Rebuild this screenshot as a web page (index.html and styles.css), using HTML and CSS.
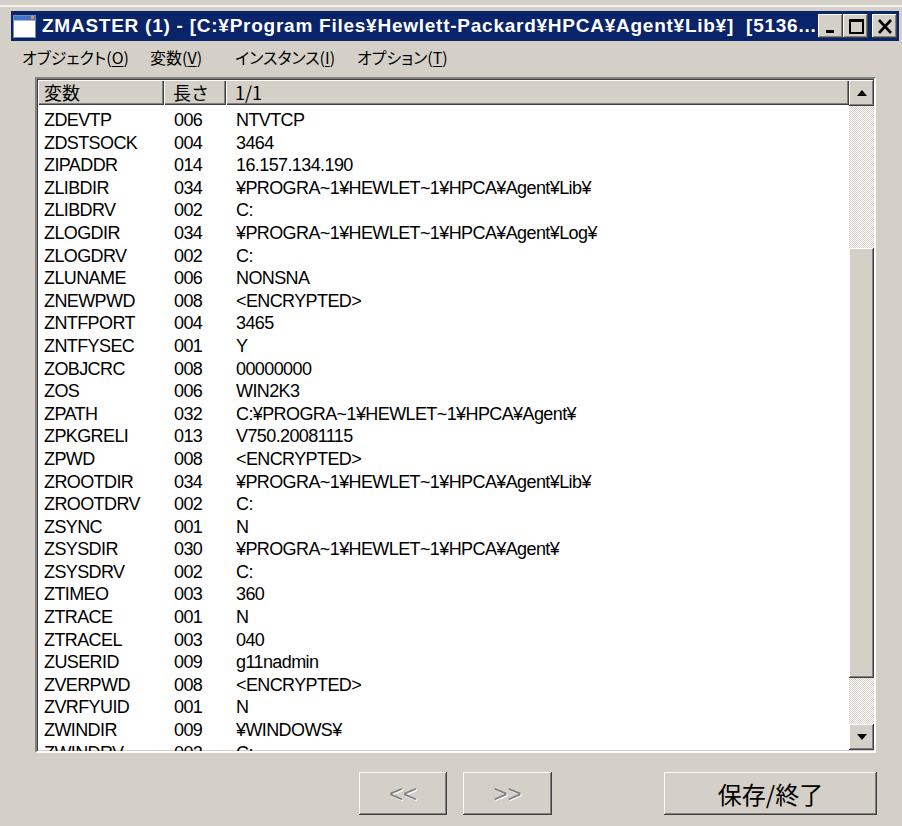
FILE: index.html
```html
<!DOCTYPE html>
<html lang="ja">
<head>
<meta charset="utf-8">
<title>ZMASTER (1)</title>
<link rel="stylesheet" href="styles.css">
</head>
<body>
<div class="frame">
  <div class="frame-top"></div>

  <div class="titlebar">
    <svg class="app-icon" width="23" height="23" viewBox="0 0 23 23">
      <rect x="0.5" y="0.5" width="22" height="22" fill="#ffffff" stroke="#6b8fc8"/>
      <rect x="1" y="1" width="21" height="4" fill="#3f74c6"/>
      <rect x="18" y="1" width="3" height="3" fill="#f08a3c"/>
      <rect x="1" y="5" width="21" height="1" fill="#9db8e4"/>
    </svg>
    <span class="title-text">ZMASTER (1) - [C:¥Program Files¥Hewlett-Packard¥HPCA¥Agent¥Lib¥]&nbsp; [5136...</span>
    <div class="caption-buttons">
      <button class="cap-btn" aria-label="最小化">
        <svg width="24" height="24" viewBox="0 0 24 24"><rect x="7" y="16" width="8" height="3" fill="#000"/></svg>
      </button>
      <button class="cap-btn" aria-label="最大化">
        <svg width="24" height="24" viewBox="0 0 24 24"><path d="M5 5h15v15H5z M7 8v10h11V8z" fill="#000" fill-rule="evenodd"/></svg>
      </button>
      <button class="cap-btn cap-close" aria-label="閉じる">
        <svg width="24" height="24" viewBox="0 0 24 24"><path d="M6 6l12 13M18 6L6 19" stroke="#000" stroke-width="2.6" fill="none"/></svg>
      </button>
    </div>
  </div>

  <nav class="menubar">
    <span class="menu-item">オブジェクト(<u>O</u>)</span>
    <span class="menu-item">変数(<u>V</u>)</span>
    <span class="menu-item">インスタンス(<u>I</u>)</span>
    <span class="menu-item">オプション(<u>T</u>)</span>
  </nav>

  <div class="listview">
    <div class="grid-pane">
      <div class="list-header">
        <div class="hcell">変数</div>
        <div class="hcell">長さ</div>
        <div class="hcell">1/1</div>
      </div>
      <div class="list-body">
        <div class="row"><span>ZDEVTP</span><span>006</span><span>NTVTCP</span></div>
        <div class="row"><span>ZDSTSOCK</span><span>004</span><span>3464</span></div>
        <div class="row"><span>ZIPADDR</span><span>014</span><span>16.157.134.190</span></div>
        <div class="row"><span>ZLIBDIR</span><span>034</span><span>¥PROGRA~1¥HEWLET~1¥HPCA¥Agent¥Lib¥</span></div>
        <div class="row"><span>ZLIBDRV</span><span>002</span><span>C:</span></div>
        <div class="row"><span>ZLOGDIR</span><span>034</span><span>¥PROGRA~1¥HEWLET~1¥HPCA¥Agent¥Log¥</span></div>
        <div class="row"><span>ZLOGDRV</span><span>002</span><span>C:</span></div>
        <div class="row"><span>ZLUNAME</span><span>006</span><span>NONSNA</span></div>
        <div class="row"><span>ZNEWPWD</span><span>008</span><span>&lt;ENCRYPTED&gt;</span></div>
        <div class="row"><span>ZNTFPORT</span><span>004</span><span>3465</span></div>
        <div class="row"><span>ZNTFYSEC</span><span>001</span><span>Y</span></div>
        <div class="row"><span>ZOBJCRC</span><span>008</span><span>00000000</span></div>
        <div class="row"><span>ZOS</span><span>006</span><span>WIN2K3</span></div>
        <div class="row"><span>ZPATH</span><span>032</span><span>C:¥PROGRA~1¥HEWLET~1¥HPCA¥Agent¥</span></div>
        <div class="row"><span>ZPKGRELI</span><span>013</span><span>V750.20081115</span></div>
        <div class="row"><span>ZPWD</span><span>008</span><span>&lt;ENCRYPTED&gt;</span></div>
        <div class="row"><span>ZROOTDIR</span><span>034</span><span>¥PROGRA~1¥HEWLET~1¥HPCA¥Agent¥Lib¥</span></div>
        <div class="row"><span>ZROOTDRV</span><span>002</span><span>C:</span></div>
        <div class="row"><span>ZSYNC</span><span>001</span><span>N</span></div>
        <div class="row"><span>ZSYSDIR</span><span>030</span><span>¥PROGRA~1¥HEWLET~1¥HPCA¥Agent¥</span></div>
        <div class="row"><span>ZSYSDRV</span><span>002</span><span>C:</span></div>
        <div class="row"><span>ZTIMEO</span><span>003</span><span>360</span></div>
        <div class="row"><span>ZTRACE</span><span>001</span><span>N</span></div>
        <div class="row"><span>ZTRACEL</span><span>003</span><span>040</span></div>
        <div class="row"><span>ZUSERID</span><span>009</span><span>g11nadmin</span></div>
        <div class="row"><span>ZVERPWD</span><span>008</span><span>&lt;ENCRYPTED&gt;</span></div>
        <div class="row"><span>ZVRFYUID</span><span>001</span><span>N</span></div>
        <div class="row"><span>ZWINDIR</span><span>009</span><span>¥WINDOWS¥</span></div>
        <div class="row"><span>ZWINDRV</span><span>002</span><span>C:</span></div>
      </div>
    </div>
    <div class="vscroll">
      <div class="sb-btn">
        <svg width="12" height="8" viewBox="0 0 12 8"><path d="M6 1L11 7H1z" fill="#000"/></svg>
      </div>
      <div class="sb-track">
        <div class="sb-gap sb-gap-top"></div>
        <div class="sb-thumb"></div>
        <div class="sb-gap"></div>
      </div>
      <div class="sb-btn">
        <svg width="12" height="8" viewBox="0 0 12 8"><path d="M6 7L11 1H1z" fill="#000"/></svg>
      </div>
    </div>
  </div>

  <div class="actions">
    <button class="push disabled">&lt;&lt;</button>
    <button class="push disabled">&gt;&gt;</button>
    <button class="push save">保存/終了</button>
  </div>
</div>
</body>
</html>
```

FILE: styles.css
```css
html, body {
  margin: 0;
  padding: 0;
  background: #d4d0c8;
}

body {
  width: 902px;
  height: 826px;
  overflow: hidden;
  font-family: "Liberation Sans", "Noto Sans CJK JP", sans-serif;
  color: #000;
}

.frame {
  display: flex;
  flex-direction: column;
}

/* outer window edge above the caption */
.frame-top {
  height: 5px;
  border-bottom: 2px solid #efeeea;
  margin-bottom: 4px;
}

/* caption bar */
.titlebar {
  display: flex;
  align-items: center;
  height: 30px;
  margin-left: 11px;
  width: 888px;
  background: #0a246a;
  box-sizing: border-box;
  padding-left: 2px;
}

.app-icon {
  flex: none;
  margin-right: 6px;
}

.title-text {
  flex: 1;
  white-space: nowrap;
  overflow: hidden;
  color: #fff;
  font-family: "Liberation Sans", sans-serif;
  font-weight: bold;
  font-size: 19px;
  letter-spacing: 0.75px;
}

.caption-buttons {
  display: flex;
  align-items: center;
  margin-right: 2px;
}

.cap-btn {
  width: 25px;
  height: 24px;
  padding: 0;
  border: 0;
  background: #d4d0c8;
  box-shadow: inset -1px -1px #404040, inset 1px 1px #fff, inset -2px -2px #808080;
  display: flex;
  align-items: center;
  justify-content: center;
}

.cap-close {
  margin-left: 4px;
}

/* menu bar */
.menubar {
  display: grid;
  grid-template-columns: 128px 85px 122px auto;
  height: 32px;
  line-height: 32px;
  padding-left: 22px;
  font-family: "Noto Sans CJK JP", sans-serif;
  font-size: 16px;
  font-feature-settings: "palt";
  white-space: nowrap;
}

.menu-item u {
  text-underline-offset: 2px;
}

/* list view */
.listview {
  margin-top: 4px;
  margin-left: 35px;
  width: 841px;
  height: 676px;
  box-sizing: border-box;
  border: 2px solid;
  border-color: #808080 #fff #fff #808080;
  box-shadow: inset 1px 1px #404040, inset -1px -1px #d4d0c8;
  background: #fff;
  display: grid;
  grid-template-columns: 1fr 25px;
}

.grid-pane {
  overflow: hidden;
  display: flex;
  flex-direction: column;
  padding-left: 1px;
  padding-top: 1px;
}

.list-header {
  display: grid;
  grid-template-columns: 126px 62px 1fr;
  height: 25px;
  flex: none;
}

.hcell {
  background: #d4d0c8;
  box-shadow: inset 1px 1px #fff, inset -1px -1px #404040, inset -2px -2px #808080;
  font-family: "Noto Sans CJK JP", sans-serif;
  font-size: 18px;
  line-height: 25px;
  padding-left: 6px;
  white-space: nowrap;
}

.hcell + .hcell {
  padding-left: 9px;
}

.list-body {
  padding-top: 4px;
  flex: 1;
  overflow: hidden;
}

.row {
  display: grid;
  grid-template-columns: 126px 62px 1fr;
  height: 22.6px;
  line-height: 22.6px;
  font-size: 18px;
  letter-spacing: -0.6px;
  white-space: nowrap;
}

.row span {
  padding-left: 6px;
  overflow: hidden;
}

.row span + span {
  padding-left: 10px;
}

/* vertical scroll bar */
.vscroll {
  display: flex;
  flex-direction: column;
  padding-top: 1px;
  padding-bottom: 1px;
}

.sb-btn {
  height: 26px;
  flex: none;
  background: #d4d0c8;
  box-shadow: inset -1px -1px #404040, inset 1px 1px #fff, inset -2px -2px #808080;
  display: flex;
  align-items: center;
  justify-content: center;
}

.sb-track {
  flex: 1;
  display: flex;
  flex-direction: column;
}

.sb-gap {
  flex: 1;
  background: repeating-conic-gradient(#d4d0c8 0 25%, #ffffff 0 50%) 0 0 / 2px 2px;
}

.sb-gap-top {
  flex: none;
  height: 142px;
}

.sb-thumb {
  height: 430px;
  flex: none;
  background: #d4d0c8;
  box-shadow: inset -1px -1px #404040, inset 1px 1px #fff, inset -2px -2px #808080;
}

/* bottom push buttons */
.actions {
  display: flex;
  margin-top: 19px;
  padding-left: 359px;
}

.push {
  height: 43px;
  padding: 0;
  border: 0;
  background: #d4d0c8;
  box-shadow: inset -1px -1px #404040, inset 1px 1px #fff, inset -2px -2px #808080;
  font-family: "Liberation Sans", "Noto Sans CJK JP", sans-serif;
  font-size: 24px;
  color: #000;
}

.push.disabled {
  width: 88px;
  color: #808080;
  text-shadow: 1px 1px #fff;
}

.push.disabled + .push.disabled {
  margin-left: 16px;
  width: 89px;
}

.push.save {
  margin-left: 112px;
  width: 213px;
  font-family: "Noto Sans CJK JP", sans-serif;
  font-size: 24px;
}
```
